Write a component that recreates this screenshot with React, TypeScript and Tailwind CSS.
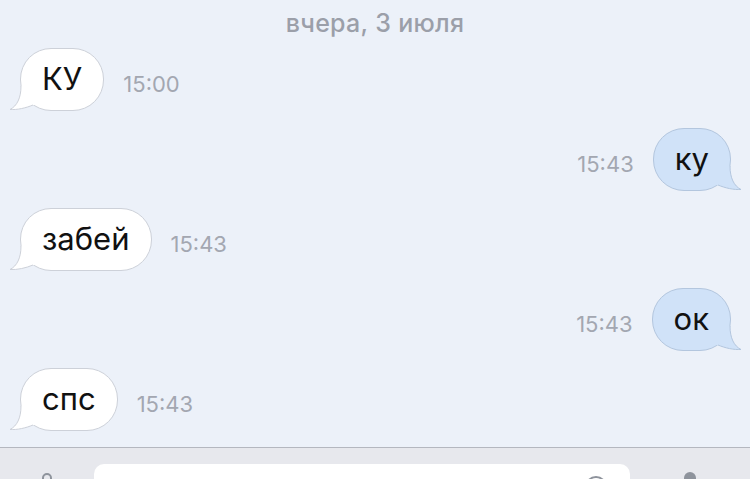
import React from 'react'

type Msg = { text: string; time: string; out: boolean }

const messages: Msg[] = [
  { text: 'КУ', time: '15:00', out: false },
  { text: 'ку', time: '15:43', out: true },
  { text: 'забей', time: '15:43', out: false },
  { text: 'ок', time: '15:43', out: true },
  { text: 'спс', time: '15:43', out: false },
]

const font = { fontFamily: '"Inter", "Noto Sans", "Liberation Sans", sans-serif' }

function TailIn() {
  return (
    <svg className="absolute left-[-12px] bottom-0" width="36" height="24" viewBox="0 0 36 24">
      <path d="M12 0 C12 12 8 20 1 23.5 C8 24 17 22 24 19 L34 19 L34 0 Z" fill="#ffffff" />
      <path d="M12 0 C12 12 8 20 1 23.5 C8 24 17 22 24 19" fill="none" stroke="#cdd1d9" strokeWidth="1" />
    </svg>
  )
}

function TailOut() {
  return (
    <svg className="absolute right-[-12px] bottom-0" width="36" height="24" viewBox="0 0 36 24">
      <path d="M24 0 C24 12 28 20 35 23.5 C28 24 19 22 12 19 L2 19 L2 0 Z" fill="#d0e2f8" />
      <path d="M24 0 C24 12 28 20 35 23.5 C28 24 19 22 12 19" fill="none" stroke="#b3c6de" strokeWidth="1" />
    </svg>
  )
}

function Bubble({ m }: { m: Msg }) {
  return (
    <div
      className={`relative h-[63px] px-[21px] flex items-center rounded-[31px] border text-[31px] text-[#111] ${
        m.out ? 'bg-[#d0e2f8] border-[#b3c6de]' : 'bg-white border-[#cdd1d9]'
      }`}
    >
      <span className="relative z-10 leading-none pb-[2px]">{m.text}</span>
      {m.out ? <TailOut /> : <TailIn />}
    </div>
  )
}

function Time({ t }: { t: string }) {
  return <span className="text-[22px] text-[#a3a7b1] pt-[10px]">{t}</span>
}

export default function App() {
  return (
    <div className="w-[750px] h-[479px] overflow-hidden bg-[#ecf1f9] flex flex-col" style={font}>
      {/* дата */}
      <div className="h-[48px] shrink-0 flex justify-center pt-[5px]">
        <span className="text-[25px] font-medium text-[#9b9fa9] tracking-[0.3px]">вчера, 3 июля</span>
      </div>

      {/* сообщения */}
      <div className="shrink-0 flex flex-col gap-[17px] pl-[20px] pr-[19px]">
        {messages.map((m, i) => (
          <div key={i} className={`flex items-center gap-[19px] ${m.out ? 'justify-end' : ''}`}>
            {m.out ? (
              <>
                <Time t={m.time} />
                <Bubble m={m} />
              </>
            ) : (
              <>
                <Bubble m={m} />
                <Time t={m.time} />
              </>
            )}
          </div>
        ))}
      </div>

      {/* панель ввода */}
      <div className="mt-[16px] shrink-0 h-[60px] border-t border-[#b4b7bf] bg-[#e7e8ed] flex items-start">
        <div className="w-[94px] flex justify-center pt-[24px]">
          <svg width="20" height="20" viewBox="0 0 20 20">
            <path d="M6 18 L6 6 A4 4 0 0 1 14 6 L14 16" fill="none" stroke="#8e939c" strokeWidth="2" strokeLinecap="round" />
          </svg>
        </div>
        <div className="mt-[16px] w-[536px] h-[40px] bg-white rounded-[10px] relative">
          <svg className="absolute right-[22px] top-[11px]" width="24" height="24" viewBox="0 0 24 24">
            <circle cx="12" cy="12" r="10" fill="none" stroke="#8e939c" strokeWidth="2" />
          </svg>
        </div>
        <div className="flex-1 flex justify-center pt-[24px]">
          <svg width="16" height="24" viewBox="0 0 16 24">
            <rect x="2" y="0" width="12" height="20" rx="6" fill="#8e939c" />
          </svg>
        </div>
      </div>
    </div>
  )
}
